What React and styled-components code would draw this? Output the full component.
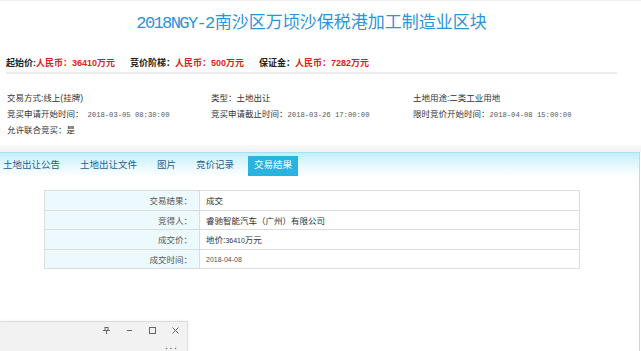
import React from "react";
import styled, { createGlobalStyle } from "styled-components";

const Global = createGlobalStyle`
  html, body { margin: 0; padding: 0; background: #fff; }
  body { font-family: "Liberation Sans", "Noto Sans CJK SC", sans-serif; }
`;

const Page = styled.div`
  position: relative;
  height: 351px;
  overflow: hidden;
  border-top: 1px solid #eeeeee;
  box-sizing: border-box;
`;

const Header = styled.div`
  margin: 0 24px 0 6px;
  border-bottom: 2px solid #ececec;
  padding-bottom: 2px;
`;

const Title = styled.h1`
  margin: 0;
  padding-top: 10px;
  text-align: center;
  font-family: "Liberation Serif", "Noto Sans CJK SC", serif;
  font-weight: normal;
  font-size: 17px;
  line-height: 24px;
  color: #2b94d8;
`;

const Latin = styled.span`
  font-family: "Liberation Mono", monospace;
  letter-spacing: -1.6px;
  margin-right: 1px;
`;

const PriceRow = styled.div`
  display: flex;
  gap: 15px;
  margin-top: 20px;
  font-size: 9px;
  font-weight: bold;
  line-height: 14px;
`;

const PriceItem = styled.span`
  color: #222;
`;

const PriceValue = styled.span`
  color: #e01b1b;
`;

const InfoGrid = styled.div`
  display: grid;
  grid-template-columns: 204px 202px 1fr;
  grid-auto-rows: 16px;
  padding: 16px 0 0 7px;
  font-size: 8.5px;
  line-height: 16px;
  color: #333;
`;

const DateText = styled.span`
  font-family: "Liberation Mono", monospace;
  font-size: 7.2px;
  color: #4e5866;
  margin-left: ${(p) => (p.$gap ? "4px" : "0")};
`;

const GrayBand = styled.div`
  height: 7px;
  margin-top: 7px;
  background: linear-gradient(to bottom, #f7f8f7, #f1f3f1);
`;

const Panel = styled.div`
  box-sizing: border-box;
  width: 640px;
  height: 200px;
  border-top: 1px solid #a6e3f3;
  border-right: 1px solid #a6e3f3;
  background: linear-gradient(to bottom, #c2eefa 0px, #e4f8fd 12px, #ffffff 24px) no-repeat;
`;

const TabBar = styled.div`
  display: flex;
  gap: 8px;
  padding-top: 3px;
  margin-left: -3px;
  height: 23px;
  box-sizing: border-box;
`;

const Tab = styled.div`
  height: 20px;
  line-height: 17px;
  padding: 0 6px 3px;
  box-sizing: border-box;
  font-size: 9.5px;
  color: ${(p) => (p.$active ? "#ffffff" : "#1e5c96")};
  background: ${(p) => (p.$active ? "#2ab3df" : "transparent")};
`;

const ResultTable = styled.table`
  margin: 14px 0 0 44px;
  width: 536px;
  border-collapse: collapse;
  border: 1px solid #dcdcdc;
  font-size: 8.5px;
`;

const Row = styled.tr`
  height: 19.5px;
`;

const LabelCell = styled.td`
  width: 147px;
  padding: 0 7px 0 0;
  border: 1px solid #dcdcdc;
  background: #ecf9fd;
  text-align: right;
  color: #555;
`;

const ValueCell = styled.td`
  padding: 0 0 0 6px;
  border: 1px solid #dcdcdc;
  color: #333;
`;

const Small = styled.span`
  font-size: 7px;
  color: ${(p) => p.$color || "#333"};
`;

const Floating = styled.div`
  position: absolute;
  left: 0;
  top: 320px;
  width: 188px;
  height: 40px;
  box-sizing: border-box;
  background: #f2f2f2;
  border: 1px solid #dedede;
  border-left: none;
  box-shadow: 0 0 3px rgba(0, 0, 0, 0.08);
`;

const Controls = styled.div`
  display: flex;
  justify-content: flex-end;
  height: 17px;
`;

const CtrlButton = styled.div`
  width: 23px;
  height: 17px;
  display: flex;
  align-items: center;
  justify-content: center;
  color: #666;
`;

const MoreRow = styled.div`
  display: flex;
  justify-content: flex-end;
  padding-right: 10px;
  height: 18px;
  align-items: center;
`;

const Icon = ({ children, size = 9 }) => (
  <svg width={size} height={size} viewBox="0 0 9 9" fill="none" stroke="#666" strokeWidth="1">
    {children}
  </svg>
);

export default function App() {
  return (
    <>
      <Global />
      <Page>
        <Header>
          <Title>
            <Latin>2018NGY-2</Latin>南沙区万顷沙保税港加工制造业区块
          </Title>
          <PriceRow>
            <PriceItem>
              起始价:<PriceValue>人民币：36410万元</PriceValue>
            </PriceItem>
            <PriceItem>
              竞价阶梯：<PriceValue>人民币：500万元</PriceValue>
            </PriceItem>
            <PriceItem>
              保证金：<PriceValue>人民币：7282万元</PriceValue>
            </PriceItem>
          </PriceRow>
        </Header>

        <InfoGrid>
          <div>交易方式:线上(挂牌)</div>
          <div>类型：土地出让</div>
          <div>土地用途:二类工业用地</div>
          <div>
            竞买申请开始时间：<DateText $gap>2018-03-05 08:30:00</DateText>
          </div>
          <div>
            竞买申请截止时间：<DateText>2018-03-26 17:00:00</DateText>
          </div>
          <div>
            限时竞价开始时间：<DateText>2018-04-08 15:00:00</DateText>
          </div>
          <div>允许联合竞买：是</div>
        </InfoGrid>

        <GrayBand />

        <Panel>
          <TabBar>
            <Tab>土地出让公告</Tab>
            <Tab>土地出让文件</Tab>
            <Tab>图片</Tab>
            <Tab>竞价记录</Tab>
            <Tab $active>交易结果</Tab>
          </TabBar>

          <ResultTable>
            <tbody>
              <Row>
                <LabelCell>交易结果：</LabelCell>
                <ValueCell>成交</ValueCell>
              </Row>
              <Row>
                <LabelCell>竞得人：</LabelCell>
                <ValueCell>睿驰智能汽车（广州）有限公司</ValueCell>
              </Row>
              <Row>
                <LabelCell>成交价：</LabelCell>
                <ValueCell>
                  地价:<Small>36410</Small>万元
                </ValueCell>
              </Row>
              <Row>
                <LabelCell>成交时间：</LabelCell>
                <ValueCell>
                  <Small $color="#555">2018-04-08</Small>
                </ValueCell>
              </Row>
            </tbody>
          </ResultTable>
        </Panel>

        <Floating>
          <Controls>
            <CtrlButton>
              <Icon>
                <path d="M2.5 1.5h4M3 1.5v3M6 1.5v3M1 4.5h7M4.5 4.5v3.5" />
              </Icon>
            </CtrlButton>
            <CtrlButton>
              <Icon>
                <path d="M2 4.5h5" />
              </Icon>
            </CtrlButton>
            <CtrlButton>
              <Icon>
                <rect x="1.5" y="1.5" width="6" height="6" />
              </Icon>
            </CtrlButton>
            <CtrlButton>
              <Icon>
                <path d="M1.5 1.5l6 6M7.5 1.5l-6 6" />
              </Icon>
            </CtrlButton>
          </Controls>
          <MoreRow>
            <svg width="12" height="3" viewBox="0 0 12 3">
              <circle cx="1.5" cy="1.5" r="0.8" fill="#777" />
              <circle cx="6" cy="1.5" r="0.8" fill="#777" />
              <circle cx="10.5" cy="1.5" r="0.8" fill="#777" />
            </svg>
          </MoreRow>
        </Floating>
      </Page>
    </>
  );
}
